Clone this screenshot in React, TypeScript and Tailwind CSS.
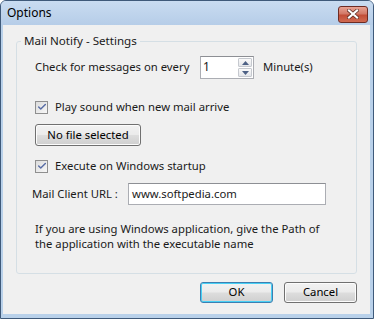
import { Check } from 'lucide-react';

function CheckBox({ label }: { label: string }) {
  return (
    <label className="flex items-center gap-[7px]">
      <span className="w-[13px] h-[13px] border border-[#8f8f8f] bg-gradient-to-br from-[#dcdcdc] to-[#f7f7f7] flex items-center justify-center">
        <Check className="w-[10px] h-[10px] text-[#5a6ea6]" strokeWidth={3.5} />
      </span>
      <span>{label}</span>
    </label>
  );
}

function WinButton({ label, primary, className }: { label: string; primary?: boolean; className?: string }) {
  return (
    <button
      className={
        'rounded-[3px] border bg-[linear-gradient(#f2f2f2_0%,#ebebeb_48%,#dddddd_52%,#cfcfcf_100%)] text-[11.3px] text-black ' +
        (primary ? 'border-[#3c7fb1] shadow-[inset_0_0_0_1px_#48d0f5] ' : 'border-[#707070] shadow-[inset_0_0_0_1px_#fcfcfc] ') +
        (className ?? '')
      }
    >
      {label}
    </button>
  );
}

export default function App() {
  return (
    <div
      className="w-[374px] h-[319px] flex flex-col bg-[#b9d1ea] border border-[#3f5a7a] rounded-t-[6px] text-[11.3px] text-[#1a1a1a] overflow-hidden"
      style={{ fontFamily: '"Segoe UI", "Noto Sans", sans-serif' }}
    >
      {/* title bar */}
      <div className="h-[24px] flex items-center justify-between pl-[6px] pr-[5px] bg-gradient-to-b from-[#c9dcf1] to-[#b6cde8]">
        <span className="text-[12px] text-black">Options</span>
        <div className="w-[30px] h-[17px] mt-[2px] rounded-[3px] border border-[#6d2b23] bg-[linear-gradient(#e8a393_0%,#d27967_45%,#c24e38_55%,#d06a51_100%)] flex items-center justify-center">
          <svg width="12" height="10" viewBox="0 0 12 10">
            <path d="M2 1.5 L10 8.5 M10 1.5 L2 8.5" stroke="#5a2a22" strokeWidth="3.6" strokeLinecap="square" />
            <path d="M2 1.5 L10 8.5 M10 1.5 L2 8.5" stroke="#ffffff" strokeWidth="2.2" strokeLinecap="square" />
          </svg>
        </div>
      </div>

      {/* client area */}
      <div className="flex-1 ml-[2px] mr-[3px] mb-[4px] bg-[#f0f0f0] flex flex-col">
        <fieldset className="mt-[8px] mx-[13px] h-[241px] border border-[#d5dfe5] rounded-[3px] pl-[18px] pr-[10px]">
          <legend className="-ml-[14px] px-[3px] text-[11.6px] leading-[16px]">Mail Notify - Settings</legend>

          <div className="mt-[7px] flex items-center h-[23px]">
            <span className="w-[165px] shrink-0 whitespace-nowrap">Check for messages on every</span>
            <div className="w-[54px] h-[23px] shrink-0 border border-[#abadb3] border-t-[#8d8f94] bg-white flex items-stretch">
              <span className="flex-1 pl-[2px] leading-[20px] text-[12px]">1</span>
              <div className="w-[15px] flex flex-col gap-px p-px pl-0">
                <div className="flex-1 border border-[#c6c9cf] rounded-[1px] bg-gradient-to-b from-[#fafafa] to-[#e4e6ea] flex items-center justify-center">
                  <svg width="7" height="4" viewBox="0 0 7 4"><path d="M0 4 L3.5 0 L7 4 Z" fill="#4d6185" /></svg>
                </div>
                <div className="flex-1 border border-[#c6c9cf] rounded-[1px] bg-gradient-to-b from-[#fafafa] to-[#e4e6ea] flex items-center justify-center">
                  <svg width="7" height="4" viewBox="0 0 7 4"><path d="M0 0 L7 0 L3.5 4 Z" fill="#4d6185" /></svg>
                </div>
              </div>
            </div>
            <span className="ml-[9px] whitespace-nowrap">Minute(s)</span>
          </div>

          <div className="mt-[20px] h-[16px] flex items-center">
            <CheckBox label="Play sound when new mail arrive" />
          </div>

          <WinButton label="No file selected" className="mt-[9px] w-[106px] h-[22px] block" />

          <div className="mt-[12px] h-[16px] flex items-center">
            <CheckBox label="Execute on Windows startup" />
          </div>

          <div className="mt-[9px] flex items-center h-[22px] -ml-[3px]">
            <span className="w-[96px] shrink-0">Mail Client URL :</span>
            <div className="w-[198px] h-[22px] border border-[#abadb3] border-t-[#8d8f94] bg-white pl-[3px] leading-[19px]">
              www.softpedia.com
            </div>
          </div>

          <p className="mt-[16px] leading-[15px]">
            If you are using Windows application, give the Path of
            <br />
            the application with the executable name
          </p>
        </fieldset>

        <div className="mt-[8px] mr-[13px] flex justify-end gap-[11px]">
          <WinButton label="OK" primary className="w-[73px] h-[21px]" />
          <WinButton label="Cancel" className="w-[73px] h-[21px]" />
        </div>
      </div>
    </div>
  );
}
